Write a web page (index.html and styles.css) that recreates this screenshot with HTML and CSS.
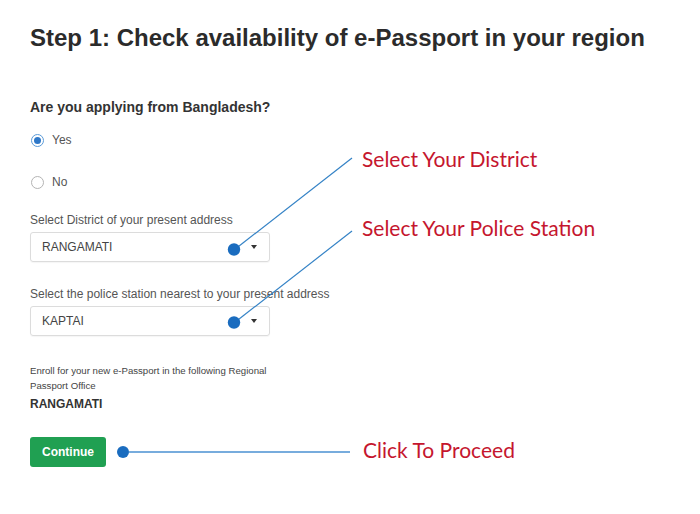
FILE: index.html
```html
<!DOCTYPE html>
<html lang="en">
<head>
<meta charset="utf-8">
<title>Step 1: Check availability of e-Passport</title>
<link rel="stylesheet" href="styles.css">
</head>
<body>
<div class="page">
  <h1 class="title">Step 1: Check availability of e-Passport in your region</h1>

  <p class="question">Are you applying from Bangladesh?</p>
  <div class="radio-row first">
    <span class="radio checked"></span><span class="radio-label">Yes</span>
  </div>
  <div class="radio-row second">
    <span class="radio"></span><span class="radio-label">No</span>
  </div>

  <div class="field first-field">
    <div class="field-label">Select District of your present address</div>
    <div class="select"><span class="select-value">RANGAMATI</span><span class="caret"></span></div>
  </div>

  <div class="field second-field">
    <div class="field-label">Select the police station nearest to your present address</div>
    <div class="select"><span class="select-value">KAPTAI</span><span class="caret"></span></div>
  </div>

  <p class="enroll">Enroll for your new e-Passport in the following Regional Passport Office</p>
  <div class="office">RANGAMATI</div>

  <div class="action-row">
    <button class="btn-continue" type="button">Continue</button>
    <div class="callout">
      <span class="callout-dot"></span>
      <span class="callout-line"></span>
      <span class="callout-text">Click To Proceed</span>
    </div>
  </div>

  <svg class="overlay" width="700" height="514" viewBox="0 0 700 514" aria-hidden="true">
    <line x1="234" y1="250" x2="352" y2="158" stroke="#3583c6" stroke-width="1.2"/>
    <line x1="234" y1="323" x2="352" y2="231" stroke="#3583c6" stroke-width="1.2"/>
    <circle cx="234" cy="249.5" r="6.2" fill="#1a6cbf"/>
    <circle cx="234" cy="322.5" r="6.2" fill="#1a6cbf"/>
  </svg>
  <div class="annot annot-district">Select Your District</div>
  <div class="annot annot-police">Select Your Police Station</div>
</div>
</body>
</html>
```

FILE: styles.css
```css
* { box-sizing: border-box; }

html, body {
  margin: 0;
  padding: 0;
  background: #ffffff;
}

body {
  font-family: "Liberation Sans", Arial, sans-serif;
  color: #333;
}

.page {
  position: relative;
  width: 700px;
  height: 514px;
  padding: 24px 30px 0 30px;
  overflow: hidden;
}

.title {
  margin: 0;
  font-size: 24px;
  line-height: 28px;
  font-weight: 700;
  color: #2b2b2b;
  white-space: nowrap;
}

.question {
  margin: 45px 0 0 0;
  font-size: 14px;
  line-height: 20px;
  font-weight: 700;
  color: #333;
}

.radio-row {
  display: flex;
  align-items: center;
  gap: 8px;
  height: 20px;
  padding-left: 1px;
}
.radio-row.first { margin-top: 13px; }
.radio-row.second { margin-top: 22px; }

.radio {
  width: 13px;
  height: 13px;
  border-radius: 50%;
  border: 1px solid #b4b4b4;
  background: #fff;
  display: flex;
  align-items: center;
  justify-content: center;
}
.radio.checked {
  border-color: #5b9bd8;
}
.radio.checked::after {
  content: "";
  width: 7px;
  height: 7px;
  border-radius: 50%;
  background: #2f78c8;
}

.radio-label {
  font-size: 12px;
  line-height: 16px;
  color: #555;
}

.field-label {
  font-size: 12px;
  line-height: 16px;
  color: #555;
  margin-bottom: 4px;
  white-space: nowrap;
}
.first-field { margin-top: 20px; }
.second-field { margin-top: 24px; }

.select {
  width: 240px;
  height: 30px;
  border: 1px solid #dcdcdc;
  border-radius: 3px;
  box-shadow: 0 1px 1px rgba(0, 0, 0, 0.04);
  display: flex;
  align-items: center;
  justify-content: space-between;
  padding: 0 12px 0 11px;
}

.select-value {
  font-size: 12px;
  color: #444;
}

.caret {
  width: 0;
  height: 0;
  border-left: 3.5px solid transparent;
  border-right: 3.5px solid transparent;
  border-top: 4px solid #333;
  margin-top: -1px;
}

.enroll {
  margin: 27px 0 0 0;
  width: 240px;
  font-size: 9.65px;
  line-height: 15px;
  color: #444;
}

.office {
  margin-top: 3px;
  font-size: 12px;
  line-height: 16px;
  font-weight: 700;
  color: #333;
}

.action-row {
  margin-top: 25px;
  display: flex;
  align-items: center;
}

.btn-continue {
  width: 76px;
  height: 30px;
  border: none;
  border-radius: 3px;
  background: #20a052;
  color: #fff;
  font-family: "Liberation Sans", Arial, sans-serif;
  font-size: 12px;
  font-weight: 700;
  padding: 0;
}

.callout {
  display: flex;
  align-items: center;
  margin-left: 11px;
}

.callout-dot {
  width: 12px;
  height: 12px;
  border-radius: 50%;
  background: #1a6cbf;
}

.callout-line {
  width: 221px;
  height: 2px;
  background: #77acdd;
  margin-top: -1px;
}

.callout-text,
.annot {
  font-family: Lato, "Open Sans", sans-serif;
  font-size: 21px;
  line-height: 24px;
  color: #c5162e;
  white-space: nowrap;
}

.callout-text {
  margin-left: 13px;
  margin-bottom: 4px;
}

.overlay {
  position: absolute;
  top: 0;
  left: 0;
  pointer-events: none;
}

.annot {
  position: absolute;
  left: 362px;
}
.annot-district { top: 147px; }
.annot-police { top: 216px; }
```
